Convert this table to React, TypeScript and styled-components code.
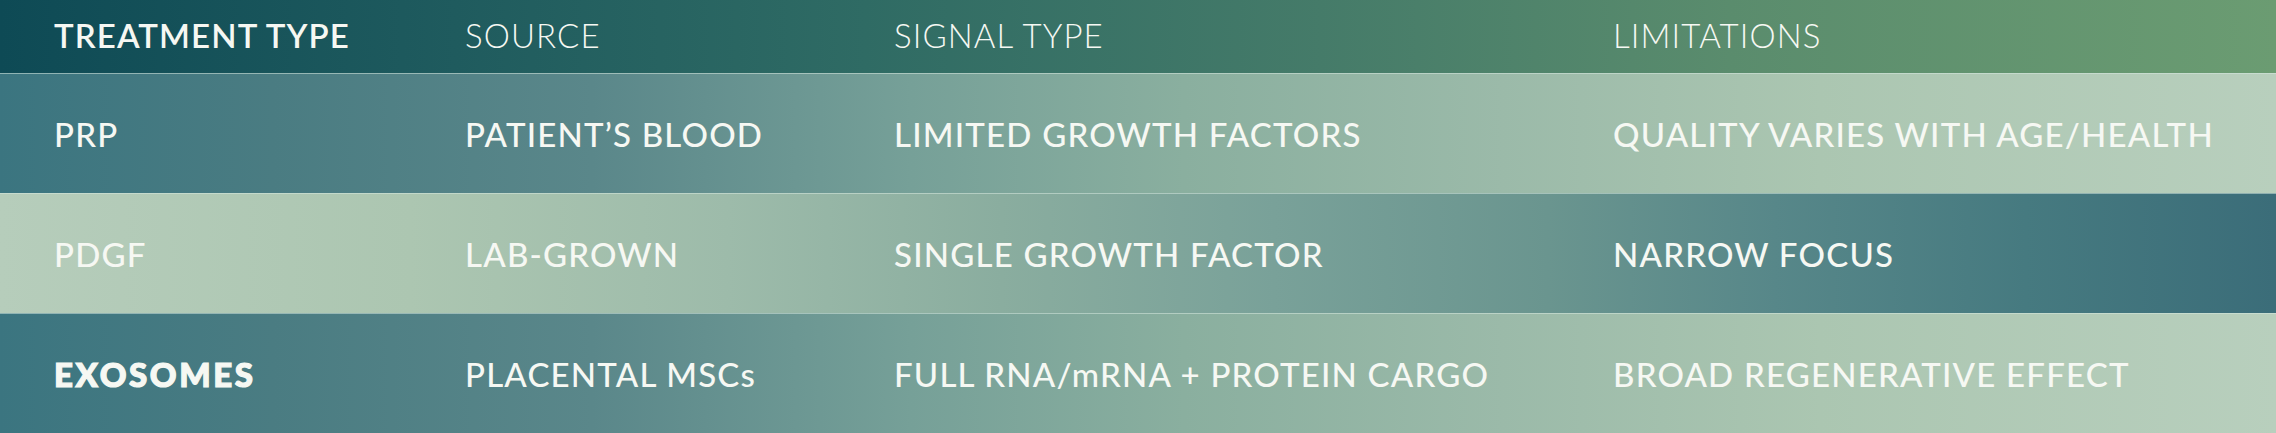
import styled, { createGlobalStyle } from "styled-components";

const GlobalStyle = createGlobalStyle`
    html, body {
        margin: 0;
        padding: 0;
        background: #3b7580;
    }
    body {
        font-family: "Lato", "Open Sans", sans-serif;
        -webkit-font-smoothing: antialiased;
    }
`

const Table = styled.div`
    width: 2276px;
    height: 433px;
    display: flex;
    flex-direction: column;
    overflow: hidden;
`

const grads = {
    head: "linear-gradient(90deg, #0e4a55 0%, #1f5b5e 20%, #2f6b64 38%, #457b69 58%, #5a8c6d 76%, #6b9c72 100%)",
    dark: "linear-gradient(90deg, #3b7580 0%, #4a7c82 12%, #5a878a 26%, #76a098 40%, #8aaf9f 52%, #9bbaa9 66%, #abc6b1 80%, #b8cfbd 100%)",
    light: "linear-gradient(90deg, #b6cdbb 0%, #acc6b1 18%, #9dbbaa 32%, #8aad9f 44%, #79a199 56%, #6a958f 68%, #578789 78%, #467a80 89%, #3b6d79 100%)",
}

const Row = styled.div<{ $tone: keyof typeof grads; $head?: boolean }>`
    display: grid;
    grid-template-columns: 411px 429px 719px 1fr;
    align-items: center;
    padding-left: 54px;
    height: ${(p) => (p.$head ? "73px" : "120px")};
    box-sizing: border-box;
    background: ${(p) => grads[p.$tone]};
    border-top: ${(p) => (p.$head ? "none" : "1.5px solid rgba(214, 232, 222, 0.55)")};
    flex-shrink: 0;
`

const Cell = styled.div<{ $weight?: number }>`
    color: #f6f8f3;
    font-size: 33px;
    font-weight: ${(p) => p.$weight ?? 500};
    text-transform: uppercase;
    letter-spacing: 1.2px;
    white-space: nowrap;
    padding-top: 1px;
`

const HeadCell = styled(Cell)`
    font-size: 33px;
    letter-spacing: 1.1px;
    padding-top: 0;
    padding-bottom: 3px;
`

const Strong = styled(Cell)`
    font-weight: 900;
    letter-spacing: 2.6px;
    -webkit-text-stroke: 1.2px #f6f8f3;
`

const Mixed = styled.span`
    text-transform: none;
`

const rows: { tone: "dark" | "light"; cells: React.ReactNode[]; strong?: boolean }[] = [
    { tone: "dark", cells: ["PRP", "Patient’s Blood", "Limited Growth Factors", "Quality Varies With Age/Health"] },
    { tone: "light", cells: ["PDGF", "Lab-Grown", "Single Growth Factor", "Narrow Focus"] },
    {
        tone: "dark",
        strong: true,
        cells: [
            "Exosomes",
            <>PLACENTAL MSC<Mixed>s</Mixed></>,
            <>FULL RNA/<Mixed>m</Mixed>RNA + PROTEIN CARGO</>,
            "Broad Regenerative Effect",
        ],
    },
]

function App() {
    return (
        <>
            <GlobalStyle />
            <Table>
                <Row $tone="head" $head>
                    <HeadCell $weight={600}>Treatment Type</HeadCell>
                    <HeadCell $weight={300}>Source</HeadCell>
                    <HeadCell $weight={300}>Signal Type</HeadCell>
                    <HeadCell $weight={300}>Limitations</HeadCell>
                </Row>
                {rows.map((row, i) => (
                    <Row key={i} $tone={row.tone}>
                        {row.cells.map((c, j) =>
                            j === 0 && row.strong ? <Strong key={j}>{c}</Strong> : <Cell key={j}>{c}</Cell>
                        )}
                    </Row>
                ))}
            </Table>
        </>
    )
}

export default App;
